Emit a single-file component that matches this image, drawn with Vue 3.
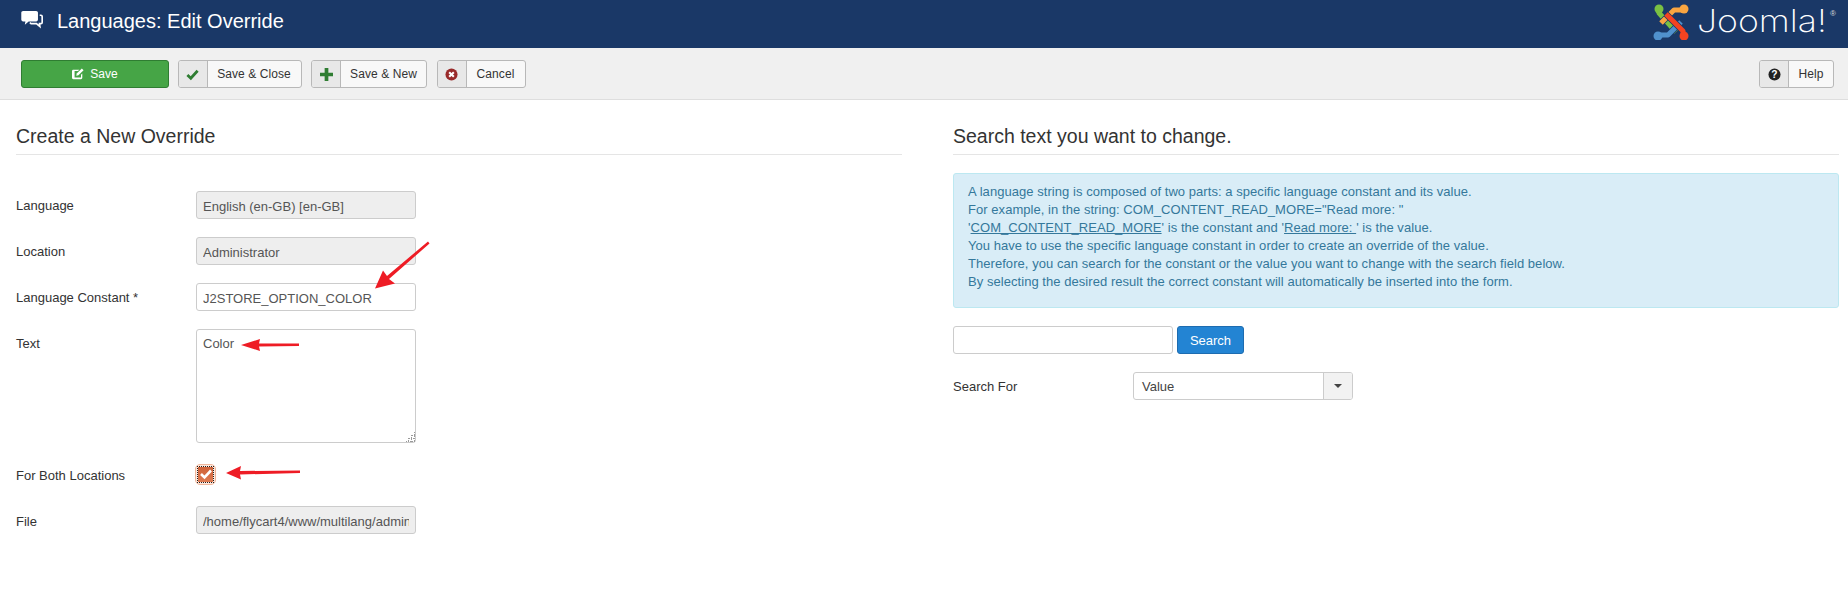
<script setup>
const toolbar = [
  { label: 'Save & Close', icon: 'check', w: 124 },
  { label: 'Save & New', icon: 'plus', w: 116 },
  { label: 'Cancel', icon: 'cancel', w: 89 }
]
const strands = [
  { color: '#7ac143', d: 'M6 6 L6 9 L23 28' },
  { color: '#5091cd', d: 'M6 31 L15 31 L28 18' },
  { color: '#f9a541', d: 'M30 6 L21 6 L8 19' },
  { color: '#f44321', d: 'M13 10 L30 27 L30 31' }
]
const balls = [
  { color: '#7ac143', x: 6, y: 5 },
  { color: '#f9a541', x: 31, y: 5 },
  { color: '#5091cd', x: 5, y: 32 },
  { color: '#f44321', x: 31, y: 32 }
]
const info = [
  'A language string is composed of two parts: a specific language constant and its value.',
  'For example, in the string: COM_CONTENT_READ_MORE="Read more: "'
]
const infoTail = [
  'You have to use the specific language constant in order to create an override of the value.',
  'Therefore, you can search for the constant or the value you want to change with the search field below.',
  'By selecting the desired result the correct constant will automatically be inserted into the form.'
]
const filePath = '/home/flycart4/www/multilang/administrator/language/overrides/en-GB.override.ini'
</script>

<template>
  <div class="page">
    <header class="topbar">
      <div class="title">
        <svg class="title-icon" viewBox="0 0 24 20" width="23" height="20">
          <path fill="#fff" d="M2.2 0.5h13.6c1.1 0 1.900.8 1.900 1.900v7.200c0 1.100-.8 1.900-1.900 1.900H8l-4 3.400.6-3.400H2.200C1.100 11.500.3 10.700.3 9.600V2.400C.3 1.300 1.100.5 2.200.5z"/>
          <path fill="none" stroke="#fff" stroke-width="1.700" d="M19.500 5h1.300c.8 0 1.300.5 1.300 1.300v6.200c0 .8-.5 1.300-1.300 1.300h-1.500l.4 3-3.600-3H10.500l-1.300-1"/>
        </svg>
        <h1>Languages: Edit Override</h1>
      </div>
      <div class="brand">
        <svg class="brand-mark" viewBox="0 0 36 36" width="36" height="36">
          <g fill="none" stroke-linejoin="round">
            <template v-for="s in strands" :key="s.color">
              <path stroke="#1a3867" stroke-width="6.500" :d="s.d"/>
              <path :stroke="s.color" stroke-width="5" :d="s.d"/>
            </template>
          </g>
          <circle v-for="b in balls" :key="b.color" :cx="b.x" :cy="b.y" r="4.500" :fill="b.color"/>
        </svg>
        <span class="brand-name">Joomla!</span><span class="brand-reg">®</span>
      </div>
    </header>

    <nav class="toolbar">
      <button class="btn-save" type="button">
        <svg viewBox="0 0 14 14" width="12" height="12">
          <path fill="#fff" d="M1.500 2h7L7 3.500H3v7.500h7.500V8L12 6.500v5c0 .8-.7 1.500-1.500 1.500h-9C.7 13 0 12.300 0 11.500v-8C0 2.700.7 2 1.500 2z"/>
          <path fill="#fff" d="M11.500.5 13.500 2.500 7.500 8.500 5 9 5.500 6.500z"/>
        </svg>
        Save
      </button>
      <button v-for="b in toolbar" :key="b.label" class="btn" type="button" :style="{ width: b.w + 'px' }">
        <span class="btn-icon">
          <svg v-if="b.icon === 'check'" viewBox="0 0 14 14" width="13" height="13">
            <path fill="none" stroke="#2f7d32" stroke-width="3" d="M1.500 7.500 5.200 11 12.500 3"/>
          </svg>
          <svg v-else-if="b.icon === 'plus'" viewBox="0 0 14 14" width="13" height="13">
            <path fill="#2f7d32" d="M5 0h4v5h5v4H9v5H5V9H0V5h5z"/>
          </svg>
          <svg v-else viewBox="0 0 14 14" width="13" height="13">
            <circle cx="7" cy="7" r="6.500" fill="#992a2a"/>
            <path stroke="#fff" stroke-width="2.200" d="M4.500 4.500l5 5m0-5l-5 5"/>
          </svg>
        </span>
        <span class="btn-label">{{ b.label }}</span>
      </button>
      <button class="btn help" type="button">
        <span class="btn-icon">
          <svg viewBox="0 0 14 14" width="13" height="13">
            <circle cx="7" cy="7" r="6.500" fill="#222"/>
            <text x="7" y="10.500" text-anchor="middle" class="qmark">?</text>
          </svg>
        </span>
        <span class="btn-label">Help</span>
      </button>
    </nav>

    <main class="columns">
      <section class="column">
        <h2 class="legend">Create a New Override</h2>
        <div class="form">
          <div class="row">
            <label>Language</label>
            <input class="field disabled" readonly value="English (en-GB) [en-GB]" />
          </div>
          <div class="row">
            <label>Location</label>
            <input class="field disabled" readonly value="Administrator" />
          </div>
          <div class="row">
            <label>Language Constant *</label>
            <input class="field" readonly value="J2STORE_OPTION_COLOR" />
          </div>
          <div class="row row-top">
            <label>Text</label>
            <div class="area-wrap">
              <textarea class="field area" readonly>Color</textarea>
              <svg class="grip" viewBox="0 0 10 10" width="10" height="10">
                <path stroke="#999" stroke-dasharray="1 1" d="M1 9.500h9M4 6.500h6M7 3.500h3M9.500 0v10M6.500 3v7M3.500 6v4"/>
              </svg>
            </div>
          </div>
          <div class="row row-check">
            <label>For Both Locations</label>
            <span class="check">
              <span class="check-box">
                <svg viewBox="0 0 14 14" width="14" height="14">
                  <path fill="none" stroke="#fff" stroke-width="2.600" d="M2 7l3.500 3.500L12 3.500"/>
                </svg>
              </span>
            </span>
          </div>
          <div class="row row-file">
            <label>File</label>
            <input class="field disabled" readonly :value="filePath" />
          </div>
        </div>
      </section>

      <section class="column">
        <h2 class="legend">Search text you want to change.</h2>
        <div class="info">
          <div v-for="l in info" :key="l">{{ l }}</div>
          <div>'<u>COM_CONTENT_READ_MORE</u>' is the constant and '<u>Read more: </u>' is the value.</div>
          <div v-for="l in infoTail" :key="l">{{ l }}</div>
        </div>
        <div class="search">
          <input class="field search-input" />
          <button class="btn-search" type="button">Search</button>
        </div>
        <div class="row search-for">
          <label>Search For</label>
          <div class="select">
            <span class="select-value">Value</span>
            <span class="select-arrow"><i></i></span>
          </div>
        </div>
      </section>
    </main>

    <svg class="arrows" width="1848" height="594" viewBox="0 0 1848 594">
      <g fill="#ee1c25">
        <path d="M428 241.500 429.500 243.500 389 279 395 283.500 375 288.500 383 270.500 387 276z"/>
        <path d="M299 343.500h-40l1-4.500-19 6 19 6-1-4.500 40-.5z"/>
        <path d="M300 470.500l-60 .5 1-5-15 7 15 6.500-1-5 60-1.500z"/>
      </g>
    </svg>
  </div>
</template>

<style>
html, body { margin: 0; background: #fff; }
</style>

<style scoped>
.page {
  position: relative;
  width: 1848px;
  height: 594px;
  overflow: hidden;
  font-family: "Liberation Sans", Arial, sans-serif;
  font-size: 13px;
  line-height: 18px;
  color: #333;
}
.topbar {
  height: 48px;
  background: #1a3867;
  display: flex;
  align-items: center;
  justify-content: space-between;
  padding: 0 0 0 21px;
  color: #fff;
}
.title { display: flex; align-items: center; gap: 13px; }
.title-icon { position: relative; top: -4px; }
.title h1 { margin: 0; font-size: 20px; font-weight: 400; line-height: 44px; position: relative; top: -3px; }
.brand { display: flex; align-items: center; height: 48px; width: 195px; box-sizing: border-box; position: relative; }
.brand-mark { margin-right: 8px; position: relative; top: -2px; flex: none; }
.brand-name {
  font-family: Inter, "Liberation Sans", sans-serif;
  font-weight: 200;
  font-size: 31px;
  line-height: 36px;
  position: relative;
  top: -3px;
  transform: scaleX(1.15);
  transform-origin: left center;
}
.brand-reg { font-size: 8px; line-height: 10px; position: absolute; left: 177px; top: 9px; color: #ddd; }

.toolbar {
  height: 50px;
  background: #f0f0f0;
  border-bottom: 1px solid #dedede;
  display: flex;
  align-items: center;
  gap: 9.500px;
  padding: 1px 14px 0 21px;
}
button { font: inherit; margin: 0; padding: 0; cursor: pointer; }
.btn-save {
  width: 148px;
  height: 28px;
  margin-right: -1px;
  background: #46a546;
  border: 1px solid #2f7d32;
  border-radius: 3px;
  color: #fff;
  font-size: 12px;
  display: flex;
  align-items: center;
  justify-content: center;
  gap: 6px;
}
.btn {
  height: 28px;
  box-sizing: border-box;
  background: #f8f8f8;
  border: 1px solid #b8b8b8;
  border-radius: 3px;
  color: #333;
  font-size: 12px;
  letter-spacing: 0.08px;
  display: flex;
  align-items: stretch;
}
.btn-icon {
  width: 29px;
  box-sizing: border-box;
  flex: none;
  background: #e8e8e8;
  border-right: 1px solid #b8b8b8;
  border-radius: 2px 0 0 2px;
  display: flex;
  align-items: center;
  justify-content: center;
}
.btn-label { flex: 1; display: flex; align-items: center; justify-content: center; }
.help { width: 75px; margin-left: auto; }
.qmark { font: 700 11px "Liberation Sans", sans-serif; fill: #fff; }

.columns {
  display: grid;
  grid-template-columns: 886px 886px;
  gap: 51px;
  padding: 0 10px 0 16px;
}
.legend {
  margin: 0;
  padding: 0 0 5px;
  height: 55px;
  box-sizing: border-box;
  border-bottom: 1px solid #e5e5e5;
  font-size: 19.500px;
  font-weight: 400;
  line-height: 72px;
  color: #333;
}
.form { padding-top: 36px; }
.row { display: flex; align-items: center; margin-bottom: 18px; }
.row-top { align-items: flex-start; margin-bottom: 19px; }
.row label { width: 180px; flex: none; font-size: 13px; padding-top: 2px; }
.row-top label { padding-top: 6px; }
.row-check { height: 24px; margin-bottom: 20px; }
.row-check label { padding-top: 3px; }
.row-file label { padding-top: 3px; }
.field {
  display: block;
  width: 220px;
  height: 28px;
  box-sizing: border-box;
  margin: 0;
  padding: 5px 6px 3px;
  border: 1px solid #ccc;
  border-radius: 3px;
  background: #fff;
  color: #555;
  font: inherit;
  line-height: 18px;
  outline: none;
}
.disabled { background: #eee; }
.area-wrap { position: relative; width: 220px; height: 114px; }
.area { height: 114px; resize: none; overflow: hidden; }
.grip { position: absolute; right: 1px; bottom: 1px; }
.check {
  margin-left: -1px;
  width: 21px;
  height: 21px;
  box-sizing: border-box;
  border: 1px solid #f0b79c;
  border-radius: 5px;
  background: #fde9df;
  display: flex;
  align-items: center;
  justify-content: center;
}
.check-box {
  width: 15px;
  height: 15px;
  background: linear-gradient(#cf6238, #de7b52);
  outline: 1px dotted #222;
  display: flex;
  align-items: center;
  justify-content: center;
}

.info {
  margin-top: 18px;
  box-sizing: border-box;
  height: 135px;
  padding: 9px 14px;
  background: #d9edf7;
  border: 1px solid #bce8f1;
  border-radius: 3px;
  color: #34789b;
  letter-spacing: 0.05px;
}
.search { display: flex; gap: 4px; margin-top: 18px; }
.btn-search {
  width: 67px;
  height: 28px;
  padding-top: 2px;
  background: #2384d3;
  border: 1px solid #1d6cb0;
  border-radius: 3px;
  color: #fff;
  font-size: 13px;
}
.search-for { margin-top: 18px; }
.select {
  width: 220px;
  height: 28px;
  box-sizing: border-box;
  border: 1px solid #ccc;
  border-radius: 3px;
  display: flex;
  background: #fff;
}
.select-value { flex: 1; padding: 5px 8px 3px; line-height: 18px; color: #444; }
.select-arrow {
  width: 28px;
  background: #f2f2f2;
  border-left: 1px solid #ccc;
  border-radius: 0 2px 2px 0;
  display: flex;
  align-items: center;
  justify-content: center;
}
.select-arrow i {
  border-style: solid;
  border-width: 4px 4px 0;
  border-color: #444 transparent transparent;
}
.arrows { position: absolute; left: 0; top: 0; pointer-events: none; }
</style>
